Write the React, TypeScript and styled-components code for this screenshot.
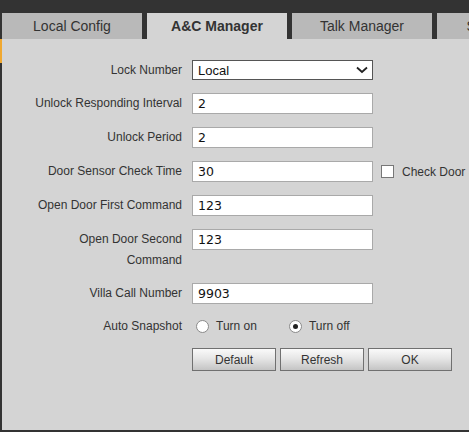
import React from 'react'
import styled, { createGlobalStyle } from 'styled-components'

const GlobalStyle = createGlobalStyle`
  html, body {
    margin: 0;
    padding: 0;
    background: #333333;
  }
  body {
    font-family: Arial, 'Liberation Sans', sans-serif;
  }
`

const tabs = ['Local Config', 'A&C Manager', 'Talk Manager', 'System Time']

const fields = [
  { label: 'Unlock Responding Interval', value: '2' },
  { label: 'Unlock Period', value: '2' },
  { label: 'Door Sensor Check Time', value: '30', check: true },
  { label: 'Open Door First Command', value: '123' },
  { label: 'Open Door Second Command', value: '123' },
  { label: 'Villa Call Number', value: '9903' },
]

export default function App() {
  return (
    <>
      <GlobalStyle />
      <Page>
        <TabBar>
          {tabs.map(t => (
            <Tab key={t} active={t === 'A&C Manager'}>
              {t}
            </Tab>
          ))}
        </TabBar>
        <Body>
          <Rail>
            <RailMark />
          </Rail>
          <Content>
            <Form>
              <Row h={20}>
                <Label h={20}>Lock Number</Label>
                <SelectBox>
                  <span>Local</span>
                  <svg width="12" height="8" viewBox="0 0 12 8">
                    <path d="M1 1.5 L6 6 L11 1.5" fill="none" stroke="#222" strokeWidth="1.8" />
                  </svg>
                </SelectBox>
              </Row>
              {fields.map(f => (
                <Row key={f.label}>
                  <Label>{f.label}</Label>
                  <Field>
                    <TextInput defaultValue={f.value} />
                    {f.check && (
                      <CheckItem>
                        <CheckBox />
                        <span>Check Door Sensor</span>
                      </CheckItem>
                    )}
                  </Field>
                </Row>
              ))}
              <Row h={18}>
                <Label h={18}>Auto Snapshot</Label>
                <RadioGroup>
                  <RadioItem>
                    <Radio />
                    Turn on
                  </RadioItem>
                  <RadioItem>
                    <Radio checked />
                    Turn off
                  </RadioItem>
                </RadioGroup>
              </Row>
              <Row h={23}>
                <span />
                <Buttons>
                  <Button>Default</Button>
                  <Button>Refresh</Button>
                  <Button>OK</Button>
                </Buttons>
              </Row>
            </Form>
          </Content>
        </Body>
      </Page>
    </>
  )
}

const Page = styled.div`
  width: 469px;
  height: 432px;
  overflow: hidden;
  background: #333333;
  display: flex;
  flex-direction: column;
`

const TabBar = styled.div`
  display: flex;
  gap: 5px;
  padding: 13px 0 0 2px;
  height: 26px;
  flex-shrink: 0;
`

const Tab = styled.div<{ active?: boolean }>`
  width: 140px;
  flex-shrink: 0;
  height: 26px;
  display: flex;
  align-items: center;
  justify-content: center;
  font-size: 14px;
  color: #333;
  font-weight: ${p => (p.active ? 'bold' : 'normal')};
  background: ${p => (p.active ? '#d4d4d4' : '#b9b9b9')};
  white-space: nowrap;
  overflow: hidden;
`

const Body = styled.div`
  display: flex;
  height: 391px;
  padding-bottom: 2px;
`

const Rail = styled.div`
  width: 2px;
  background: #333;
  flex-shrink: 0;
`

const RailMark = styled.div`
  width: 3px;
  height: 24px;
  background: #f0a830;
`

const Content = styled.div`
  flex: 1;
  background: #d4d4d4;
  padding-top: 21px;
`

const Form = styled.div`
  display: flex;
  flex-direction: column;
  gap: 13px;
`

const Row = styled.div<{ h?: number }>`
  display: grid;
  grid-template-columns: 150px auto;
  column-gap: 10px;
  padding-left: 30px;
  align-items: ${p => (p.h ? 'center' : 'start')};
  ${p => (p.h ? `height: ${p.h}px;` : '')}
`

const Label = styled.div<{ h?: number }>`
  text-align: right;
  font-size: 12px;
  line-height: ${p => (p.h ? `${p.h}px` : '20.5px')};
  min-height: ${p => (p.h ? `${p.h}px` : '21px')};
  color: #333;
`

const SelectBox = styled.div`
  width: 181px;
  height: 20px;
  box-sizing: border-box;
  border: 1px solid #555;
  background: #fff;
  display: flex;
  align-items: center;
  justify-content: space-between;
  padding: 0 4px 0 5px;
  font-size: 13px;
  color: #111;
`

const Field = styled.div`
  display: flex;
  align-items: center;
  gap: 8px;
`

const TextInput = styled.input`
  width: 181px;
  height: 21px;
  box-sizing: border-box;
  border: 1px solid #a9a9a9;
  background: #fff;
  padding: 0 5px;
  margin: 0;
  font-family: 'DejaVu Sans', Verdana, sans-serif;
  font-size: 12.5px;
  color: #111;
  outline: none;
`

const CheckItem = styled.label`
  display: flex;
  align-items: center;
  gap: 8px;
  font-size: 12px;
  color: #333;
  white-space: nowrap;
`

const CheckBox = styled.span`
  width: 13px;
  height: 13px;
  box-sizing: border-box;
  border: 1px solid #777;
  background: #fff;
`

const RadioGroup = styled.div`
  display: flex;
  align-items: center;
  gap: 32px;
  height: 18px;
  padding-left: 4px;
`

const RadioItem = styled.label`
  display: flex;
  align-items: center;
  gap: 7px;
  font-size: 12px;
  color: #333;
`

const Radio = styled.span<{ checked?: boolean }>`
  width: 13px;
  height: 13px;
  box-sizing: border-box;
  border-radius: 50%;
  border: 1px solid #8a8a8a;
  background: #fff;
  display: flex;
  align-items: center;
  justify-content: center;
  &::after {
    content: '';
    width: 5px;
    height: 5px;
    border-radius: 50%;
    background: ${p => (p.checked ? '#222' : 'transparent')};
  }
`

const Buttons = styled.div`
  display: flex;
  gap: 4px;
`

const Button = styled.button`
  width: 84px;
  height: 23px;
  box-sizing: border-box;
  border: 1px solid #707070;
  background: linear-gradient(#fafafa, #e6e6e6 45%, #c4c4c4);
  font-family: Arial, 'Liberation Sans', sans-serif;
  font-size: 12px;
  color: #333;
  padding: 0;
  cursor: pointer;
`
